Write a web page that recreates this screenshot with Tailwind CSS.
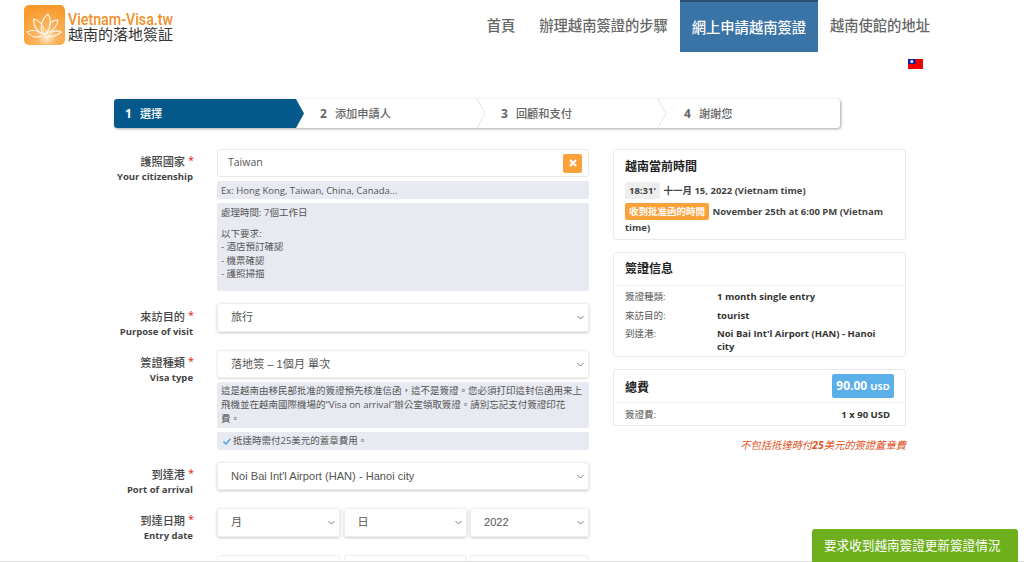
<!DOCTYPE html>
<html lang="zh-Hant">
<head>
    <meta charset="UTF-8">
    <meta name="viewport" content="width=device-width, initial-scale=1.0">
    <title>Vietnam-Visa.tw</title>
    <script src="https://cdn.jsdelivr.net/npm/@tailwindcss/browser@4"></script>
</head>
<body class="bg-white text-[#555] font-['Open_Sans','Noto_Sans_CJK_TC',sans-serif]">
<div class="relative w-[1024px] h-[562px] overflow-hidden">

    <!-- header -->
    <header class="flex h-[52px] pl-[24px]">
        <a class="flex pt-[5px]">
            <svg class="w-[41px] h-[40px] shrink-0" viewBox="0 0 41 40">
                <defs>
                    <radialGradient id="logoBg" cx="0.55" cy="0.8" r="0.75">
                        <stop offset="0" stop-color="#fff3dc"/>
                        <stop offset="0.3" stop-color="#fbb765"/>
                        <stop offset="1" stop-color="#f99a2c"/>
                    </radialGradient>
                </defs>
                <rect width="41" height="40" rx="5" fill="url(#logoBg)"/>
                <g fill="none" stroke="#fff" stroke-width="1.1" opacity="0.9">
                    <path d="M20 30C15 24 17 15 24 9C28 16 27 24 20 30Z"/>
                    <path d="M19 29C13 27 9 21 10 14C15 15 19 20 20 25"/>
                    <path d="M23 28C28 26 33 22 34 15C30 15 27 17 25 20"/>
                    <path d="M18 31C13 33 7 32 3 27C7 25 12 25 17 28"/>
                    <path d="M24 31C29 32 34 30 37 27C33 25 29 26 26 28"/>
                </g>
            </svg>
            <div class="ml-[3px] pt-[7px]">
                <div class="font-['Roboto',sans-serif] font-medium text-[16px] leading-[15px] text-[#f0902a] w-[106px] whitespace-nowrap scale-x-[0.89] origin-left">Vietnam-Visa.tw</div>
                <div class="text-[15px] leading-[15px] text-[#333] whitespace-nowrap">越南的落地簽証</div>
            </div>
        </a>
        <nav class="flex ml-auto mr-[82px] h-[52px] text-[14.3px] font-medium text-[#666] whitespace-nowrap">
            <a class="px-[12px] pt-[16px] leading-[20px]">首頁</a>
            <a class="px-[12px] pt-[16px] leading-[20px]">辦理越南簽證的步驟</a>
            <a class="w-[138px] text-center pt-[16px] leading-[20px] bg-[#3a74a6] text-white border-t-2 border-[#2a4f73]">網上申請越南簽證</a>
            <a class="px-[12px] pt-[16px] leading-[20px]">越南使館的地址</a>
        </nav>
    </header>

    <!-- language -->
    <div class="flex justify-end pr-[101px] pt-[7px] h-[47px]">
        <svg class="w-[15px] h-[10px]" viewBox="0 0 15 10">
            <rect width="15" height="10" fill="#f00000"/>
            <rect width="7.5" height="5" fill="#0a1fb0"/>
            <circle cx="3.75" cy="2.5" r="1.5" fill="#fff"/>
        </svg>
    </div>

    <!-- steps -->
    <div class="relative flex ml-[114px] w-[726px] h-[29px] rounded-[3px] bg-white shadow-[1px_1px_3px_rgba(0,0,0,0.35)] text-[11.2px] font-medium leading-[29px] text-[#666]">
        <div class="w-[190px] pl-[11px] bg-[#04588a] text-white rounded-l-[3px] [clip-path:polygon(0_0,182px_0,190px_50%,182px_100%,0_100%)]">
            <span class="font-bold text-[12px] mr-[8px]">1</span>選擇
        </div>
        <div class="w-[181px] pl-[16px]"><span class="font-bold text-[12px] mr-[8px]">2</span>添加申請人</div>
        <div class="w-[183px] pl-[16px]"><span class="font-bold text-[12px] mr-[8px]">3</span>回顧和支付</div>
        <div class="flex-1 pl-[16px]"><span class="font-bold text-[12px] mr-[8px]">4</span>謝謝您</div>
        <svg class="absolute left-[363px] top-0 w-[9px] h-[29px]" viewBox="0 0 9 29" fill="none" stroke="#e4e4e4"><path d="M0 0L8 14.5L0 29"/></svg>
        <svg class="absolute left-[544px] top-0 w-[9px] h-[29px]" viewBox="0 0 9 29" fill="none" stroke="#e4e4e4"><path d="M0 0L8 14.5L0 29"/></svg>
    </div>

    <main class="flex ml-[114px] mt-[21px]">

        <!-- form -->
        <section class="w-[475px]">
            <div class="flex">
                <div class="w-[79px] h-[28px] shrink-0 text-right pt-[5px]">
                    <div class="text-[11.2px] leading-[15px] font-medium text-[#444] whitespace-nowrap">護照國家 <span class="relative -top-[2px] -mr-[1px] text-[11px] text-[#e01010]">*</span></div>
                    <div class="text-[9.5px] leading-[16px] font-bold text-[#444] whitespace-nowrap">Your citizenship</div>
                </div>
                <div class="ml-[24px] w-[372px]">
                    <div class="flex items-center justify-between h-[28px] pl-[10px] pr-[6px] border border-[#e8e8e8] rounded-[3px] text-[10.5px]">
                        <span>Taiwan</span>
                        <span class="flex items-center justify-center w-[19px] h-[19px] rounded-[2px] bg-[#fba13a]">
                            <svg class="w-[8px] h-[8px]" viewBox="0 0 8 8" fill="none" stroke="#fff" stroke-width="2"><path d="M1 1L7 7M7 1L1 7"/></svg>
                        </span>
                    </div>
                    <div class="mt-[4px] h-[18px] px-[4px] rounded-[2px] bg-[#e8eaf2] text-[9.5px] leading-[19px]">Ex: Hong Kong, Taiwan, China, Canada...</div>
                    <div class="mt-[4px] h-[88px] px-[4px] pt-[3px] rounded-[2px] bg-[#e8eaf2] text-[9.5px] leading-[13.5px]">
                        <p class="mb-[7px]">處理時間: 7個工作日</p>
                        <p>以下要求:</p>
                        <p>- 酒店預訂確認</p>
                        <p>- 機票確認</p>
                        <p>- 護照掃描</p>
                    </div>
                </div>
            </div>

            <div class="flex mt-[12px]">
                <div class="w-[79px] h-[29px] shrink-0 text-right pt-[6px]">
                    <div class="text-[11.2px] leading-[15px] font-medium text-[#444] whitespace-nowrap">來訪目的 <span class="relative -top-[2px] -mr-[1px] text-[11px] text-[#e01010]">*</span></div>
                    <div class="text-[9.5px] leading-[15px] font-bold text-[#444] whitespace-nowrap">Purpose of visit</div>
                </div>
                <div class="ml-[24px] w-[372px] flex items-center justify-between h-[29px] pl-[13px] pr-[4px] border border-[#eee] rounded-[3px] shadow-[0_1px_3px_rgba(0,0,0,0.22)] text-[11.1px] font-['Liberation_Sans','Noto_Sans_CJK_TC',sans-serif]">
                    <span>旅行</span>
                    <svg class="w-[7px] h-[5px]" viewBox="0 0 7 5" fill="none" stroke="#777"><path d="M0.5 1L3.5 4L6.5 1"/></svg>
                </div>
            </div>

            <div class="flex mt-[18px]">
                <div class="w-[79px] h-[28px] shrink-0 text-right pt-[5px]">
                    <div class="text-[11.2px] leading-[15px] font-medium text-[#444] whitespace-nowrap">簽證種類 <span class="relative -top-[2px] -mr-[1px] text-[11px] text-[#e01010]">*</span></div>
                    <div class="text-[9.5px] leading-[15px] font-bold text-[#444] whitespace-nowrap">Visa type</div>
                </div>
                <div class="ml-[24px] w-[372px]">
                    <div class="flex items-center justify-between h-[28px] pl-[13px] pr-[4px] border border-[#eee] rounded-[3px] shadow-[0_1px_2px_rgba(0,0,0,0.15)] text-[11.1px] font-['Liberation_Sans','Noto_Sans_CJK_TC',sans-serif]">
                        <span>落地簽 – 1個月 單次</span>
                        <svg class="w-[7px] h-[5px]" viewBox="0 0 7 5" fill="none" stroke="#777"><path d="M0.5 1L3.5 4L6.5 1"/></svg>
                    </div>
                    <div class="mt-[4px] h-[46px] px-[4px] pt-[2px] rounded-[2px] bg-[#e8eaf2] text-[9.5px] leading-[14px]">這是越南由移民部批准的簽證預先核准信函，這不是簽證。您必須打印這封信函用来上飛機並在越南國際機場的“Visa on arrival”辦公室領取簽證。請別忘記支付簽證印花<br>費。</div>
                    <div class="flex items-center mt-[4px] h-[18px] px-[6px] rounded-[2px] bg-[#e8eaf2] text-[9.5px]">
                        <svg class="w-[8px] h-[7px] mr-[2px]" viewBox="0 0 8 7" fill="none" stroke="#4a9de0" stroke-width="1.4"><path d="M0.5 3.5L3 6L7.5 0.8"/></svg>
                        抵達時需付25美元的蓋章費用。
                    </div>
                </div>
            </div>

            <div class="flex mt-[12px]">
                <div class="w-[79px] h-[28px] shrink-0 text-right pt-[5px]">
                    <div class="text-[11.2px] leading-[15px] font-medium text-[#444] whitespace-nowrap">到達港 <span class="relative -top-[2px] -mr-[1px] text-[11px] text-[#e01010]">*</span></div>
                    <div class="text-[9.5px] leading-[15px] font-bold text-[#444] whitespace-nowrap">Port of arrival</div>
                </div>
                <div class="ml-[24px] w-[372px] flex items-center justify-between h-[28px] pl-[13px] pr-[4px] border border-[#eee] rounded-[3px] shadow-[0_1px_3px_rgba(0,0,0,0.22)] text-[11.1px] font-['Liberation_Sans','Noto_Sans_CJK_TC',sans-serif]">
                    <span>Noi Bai Int'l Airport (HAN) - Hanoi city</span>
                    <svg class="w-[7px] h-[5px]" viewBox="0 0 7 5" fill="none" stroke="#777"><path d="M0.5 1L3.5 4L6.5 1"/></svg>
                </div>
            </div>

            <div class="flex mt-[18px]">
                <div class="w-[79px] h-[29px] shrink-0 text-right pt-[5px]">
                    <div class="text-[11.2px] leading-[15px] font-medium text-[#444] whitespace-nowrap">到達日期 <span class="relative -top-[2px] -mr-[1px] text-[11px] text-[#e01010]">*</span></div>
                    <div class="text-[9.5px] leading-[15px] font-bold text-[#444] whitespace-nowrap">Entry date</div>
                </div>
                <div class="ml-[24px] w-[372px] grid grid-cols-[123px_123px_119px] gap-x-[3.5px] gap-y-[18px] text-[11.1px] font-['Liberation_Sans','Noto_Sans_CJK_TC',sans-serif]">
                    <div class="flex items-center justify-between h-[29px] pl-[13px] pr-[4px] border border-[#eee] rounded-[3px] shadow-[0_1px_3px_rgba(0,0,0,0.22)]">
                        <span>月</span>
                        <svg class="w-[7px] h-[5px]" viewBox="0 0 7 5" fill="none" stroke="#777"><path d="M0.5 1L3.5 4L6.5 1"/></svg>
                    </div>
                    <div class="flex items-center justify-between h-[29px] pl-[13px] pr-[4px] border border-[#eee] rounded-[3px] shadow-[0_1px_3px_rgba(0,0,0,0.22)]">
                        <span>日</span>
                        <svg class="w-[7px] h-[5px]" viewBox="0 0 7 5" fill="none" stroke="#777"><path d="M0.5 1L3.5 4L6.5 1"/></svg>
                    </div>
                    <div class="flex items-center justify-between h-[29px] pl-[13px] pr-[4px] border border-[#eee] rounded-[3px] shadow-[0_1px_3px_rgba(0,0,0,0.22)]">
                        <span>2022</span>
                        <svg class="w-[7px] h-[5px]" viewBox="0 0 7 5" fill="none" stroke="#777"><path d="M0.5 1L3.5 4L6.5 1"/></svg>
                    </div>
                    <div class="h-[29px] border border-[#eee] rounded-[3px]"></div>
                    <div class="h-[29px] border border-[#eee] rounded-[3px]"></div>
                    <div class="h-[29px] border border-[#eee] rounded-[3px]"></div>
                </div>
            </div>
        </section>

        <!-- summary -->
        <aside class="ml-[24px] w-[293px]">
            <div class="h-[91px] px-[11px] pt-[8px] border border-[#e9e9e9] rounded-[3px]">
                <h3 class="text-[12px] leading-[18px] font-semibold text-[#222]">越南當前時間</h3>
                <div class="mt-[6px] text-[9.5px] font-bold leading-[17px] text-[#444]">
                    <span class="inline-block px-[4px] rounded-[2px] bg-[#eee]">18:31'</span>
                    <span class="ml-[1px]">十一月 15, 2022 (Vietnam time)</span>
                </div>
                <div class="mt-[4px] text-[9.5px] font-bold leading-[16px] text-[#444]">
                    <span class="inline-block px-[4px] mr-[1px] rounded-[2px] bg-[#fba13a] text-white font-semibold leading-[17px]">收到批准函的時間</span>
                    November 25th at 6:00 PM (Vietnam time)
                </div>
            </div>

            <div class="mt-[12px] h-[105px] border border-[#e9e9e9] rounded-[3px]">
                <h3 class="h-[33px] px-[11px] text-[12px] leading-[32px] font-semibold text-[#222] border-b border-[#f0f0f0]">簽證信息</h3>
                <dl class="grid grid-cols-[92px_1fr] px-[11px] pt-[2px] text-[9.5px] leading-[13.5px]">
                    <dt class="py-[2.4px]">簽證種類:</dt><dd class="py-[2.4px] font-bold text-[#333]">1 month single entry</dd>
                    <dt class="py-[2.4px]">來訪目的:</dt><dd class="py-[2.4px] font-bold text-[#333]">tourist</dd>
                    <dt class="py-[2.4px]">到達港:</dt><dd class="py-[2.4px] font-bold text-[#333] w-[170px]">Noi Bai Int'l Airport (HAN) - Hanoi city</dd>
                </dl>
            </div>

            <div class="mt-[12px] h-[57px] border border-[#e9e9e9] rounded-[3px]">
                <div class="flex items-center justify-between h-[33px] pl-[11px] pr-[11px] border-b border-[#f0f0f0]">
                    <h3 class="pt-[3px] text-[12px] font-semibold text-[#222]">總費</h3>
                    <span class="w-[62px] h-[24px] rounded-[2px] bg-[#5bb0ea] text-center text-white text-[12px] leading-[24px] font-bold whitespace-nowrap">90.00 <span class="text-[9.5px]">USD</span></span>
                </div>
                <div class="flex justify-between pl-[11px] pr-[15px] pt-[5px] text-[9.5px] leading-[14px]">
                    <span>簽證費:</span>
                    <span class="font-bold text-[#333]">1 x 90 USD</span>
                </div>
            </div>

            <p class="mt-[12px] text-right text-[10.3px] leading-[14px] italic text-[#e0521c]">不包括抵達時付<b>25</b>美元的簽證蓋章費</p>
        </aside>
    </main>

    <div class="absolute left-0 right-0 bottom-0 h-px bg-[#ddd]"></div>

    <a class="absolute right-[6px] bottom-0 w-[206px] h-[33px] pl-[12px] rounded-t-[3px] bg-[#6eb01c] text-white text-[12.6px] leading-[33px] whitespace-nowrap">要求收到越南簽證更新簽證情況</a>
</div>
</body>
</html>
